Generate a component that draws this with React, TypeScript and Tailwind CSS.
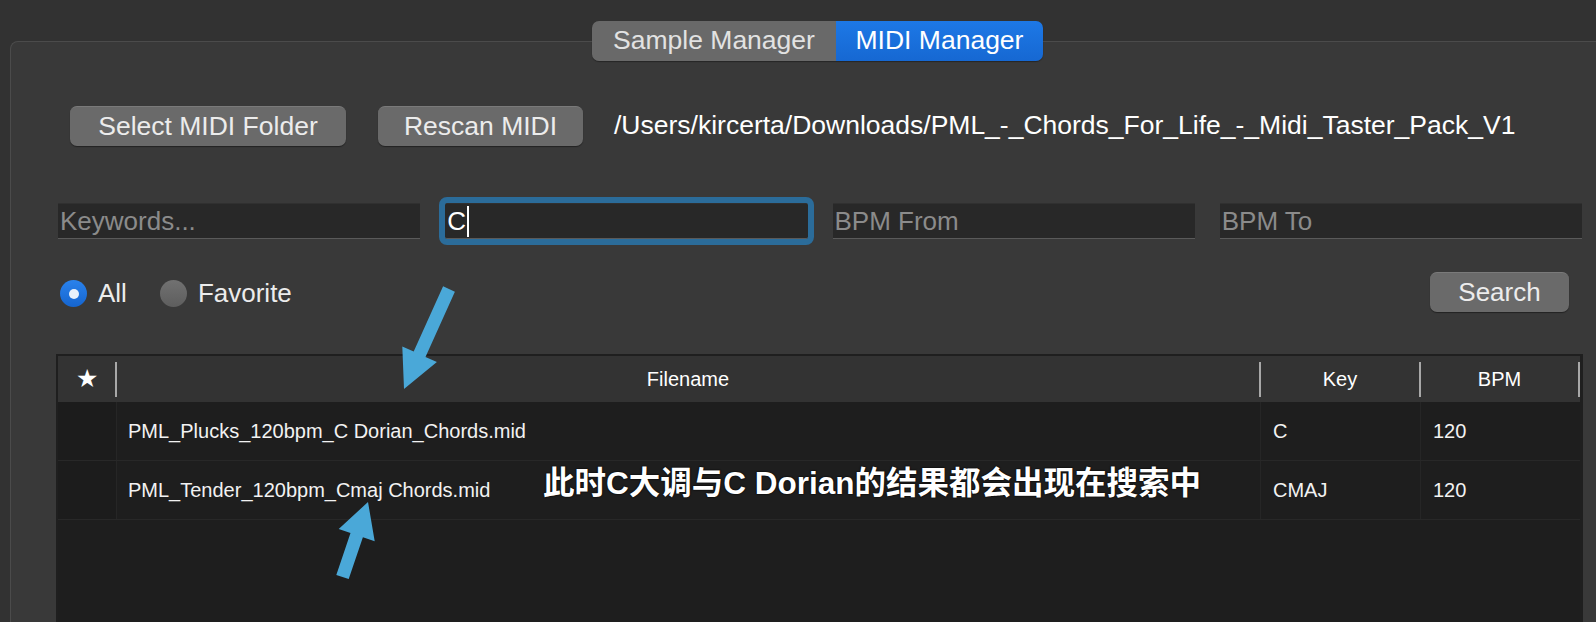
import React from 'react'

const font = { fontFamily: '"Liberation Sans", Arial, sans-serif' }

const rows = [
  { name: 'PML_Plucks_120bpm_C Dorian_Chords.mid', key: 'C', bpm: '120' },
  { name: 'PML_Tender_120bpm_Cmaj Chords.mid', key: 'CMAJ', bpm: '120' },
]

function Field({ placeholder }: { placeholder: string }) {
  return (
    <div className="flex h-[36px] items-center border-b border-t border-b-[#5a5a5a] border-t-[#303030] bg-[#282828] pl-[2px] text-[26px] text-[#8b8b8b]">
      {placeholder}
    </div>
  )
}

function HeaderCell({ children, big }: { children?: React.ReactNode; big?: boolean }) {
  return (
    <div className="flex h-[46px] items-center">
      <div className={`flex flex-1 justify-center text-white ${big ? 'text-[25px]' : 'text-[20px]'}`}>{children}</div>
      <div className="h-[35px] w-[2px] bg-[#a8a8a8]" />
    </div>
  )
}

export default function App() {
  return (
    <div className="relative h-[622px] w-[1596px] overflow-hidden bg-[#323232] pl-[10px] pt-[21px]" style={font}>
      <div className="w-[1615px]">
        {/* tabs */}
        <div className="relative z-10 flex justify-center">
          <div className="flex h-[40px] overflow-hidden rounded-[7px] shadow-[0_1px_1px_rgba(0,0,0,0.35)]">
            <div className="flex w-[244px] items-center justify-center bg-[#696969] text-[26.5px] text-[#e2e2e2]">
              Sample Manager
            </div>
            <div className="flex w-[207px] items-center justify-center bg-gradient-to-b from-[#1d78e6] to-[#1668d2] text-[26.5px] text-white">
              MIDI Manager
            </div>
          </div>
        </div>

        {/* panel */}
        <div className="-mt-[20px] h-[620px] rounded-tl-[8px] border-l border-t border-[#4b4b4b] bg-[#393939] pl-[47px] pt-[64px]">
          <div className="flex h-[40px] items-center">
            <button className="ml-[12px] flex h-[40px] w-[276px] items-center justify-center rounded-[7px] border-t border-[#7a7a7a] bg-[#6a6a6a] text-[26.5px] text-[#ececec] shadow-[0_1px_1px_rgba(0,0,0,0.4)]">
              Select MIDI Folder
            </button>
            <button className="ml-[32px] flex h-[40px] w-[205px] items-center justify-center rounded-[7px] border-t border-[#7a7a7a] bg-[#6a6a6a] text-[26.5px] text-[#ececec] shadow-[0_1px_1px_rgba(0,0,0,0.4)]">
              Rescan MIDI
            </button>
            <span className="ml-[31px] text-[26.5px] text-white">
              /Users/kircerta/Downloads/PML_-_Chords_For_Life_-_Midi_Taster_Pack_V1
            </span>
          </div>

          <div className="mt-[57px] grid w-[1524px] grid-cols-4 gap-[25px]">
            <Field placeholder="Keywords..." />
            <div className="flex h-[36px] items-center rounded-[2px] border-b border-t border-b-[#5a5a5a] border-t-[#303030] bg-[#282828] pl-[2px] text-[26px] text-white outline-[6px] outline-solid outline-[#2b6c9a]">
              C<span className="ml-[1px] h-[31px] w-[2px] bg-white" />
            </div>
            <Field placeholder="BPM From" />
            <Field placeholder="BPM To" />
          </div>

          <div className="mt-[33px] flex h-[40px] w-[1511px] items-center justify-between">
            <div className="ml-[2px] flex items-center pt-[3px]">
              <div className="flex h-[27px] w-[27px] items-center justify-center rounded-full bg-gradient-to-b from-[#2a82ec] to-[#1565cf]">
                <div className="h-[10px] w-[10px] rounded-full bg-[#e8f1fb]" />
              </div>
              <span className="ml-[11px] text-[26px] text-[#ececec]">All</span>
              <div className="ml-[33px] h-[27px] w-[27px] rounded-full bg-gradient-to-b from-[#717171] to-[#5e5e5e]" />
              <span className="ml-[11px] text-[26px] text-[#ececec]">Favorite</span>
            </div>
            <button className="flex h-[40px] w-[139px] items-center justify-center rounded-[7px] border-t border-[#7a7a7a] bg-[#6a6a6a] text-[26px] text-[#ececec] shadow-[0_1px_1px_rgba(0,0,0,0.4)]">
              Search
            </button>
          </div>

          {/* table */}
          <div className="ml-[-2px] mt-[42px] h-[300px] w-[1527px] border-l-2 border-r-[3px] border-t-2 border-[#1f1f1f] bg-[#1e1e1e]">
            <div className="grid grid-cols-[59px_1144px_160px_159px] bg-[#333333]">
              <HeaderCell big>★</HeaderCell>
              <HeaderCell>Filename</HeaderCell>
              <HeaderCell>Key</HeaderCell>
              <HeaderCell>BPM</HeaderCell>
            </div>
            {rows.map((r) => (
              <div key={r.name} className="grid h-[59px] grid-cols-[59px_1144px_160px_159px] border-b border-[#282828] text-[20px] text-[#f2f2f2]">
                <div className="border-r border-[#262626] bg-[#1c1c1c]" />
                <div className="flex items-center border-r border-[#262626] pl-[11px]">{r.name}</div>
                <div className="flex items-center border-r border-[#262626] pl-[12px]">{r.key}</div>
                <div className="flex items-center pl-[12px]">{r.bpm}</div>
              </div>
            ))}
          </div>
        </div>
      </div>

      {/* annotations */}
      <div
        className="absolute left-[543px] top-[462px] text-[31.5px] font-bold leading-[42px] text-white [text-shadow:0_0_2px_#000,0_0_1px_#000]"
        style={{ fontFamily: '"Liberation Sans", "Noto Sans CJK SC", sans-serif' }}
      >
        此时C大调与C Dorian的结果都会出现在搜索中
      </div>
      <svg className="pointer-events-none absolute left-0 top-0" width="1596" height="622">
        <polygon
          fill="#4aa8d8"
          points="443.1,286.3 454.9,291.7 425.5,357 436.9,362.1 404,389 402.3,346.5 413.7,351.6"
        />
        <polygon
          fill="#4aa8d8"
          points="336.3,574.9 348.7,579.1 362.9,537.2 374.7,541.2 368,502 338.7,529 350.5,533"
        />
      </svg>
    </div>
  )
}
